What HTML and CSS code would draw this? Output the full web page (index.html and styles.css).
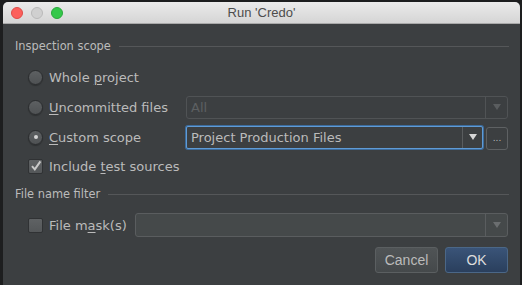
FILE: index.html
```html
<!DOCTYPE html>
<html lang="en">
<head>
    <meta charset="UTF-8">
    <title>Run 'Credo'</title>
    <link rel="stylesheet" href="styles.css">
</head>
<body>
    <div class="window">
        <div class="titlebar">
            <div class="lights">
                <span class="light red"></span>
                <span class="light gray"></span>
                <span class="light green"></span>
            </div>
            <div class="title">Run 'Credo'</div>
            <div class="lights-spacer"></div>
        </div>

        <div class="content">
            <div class="group-title">
                <span>Inspection scope</span>
                <div class="rule"></div>
            </div>

            <div class="row">
                <label class="option"><span class="radio"></span><span>Whole <u>p</u>roject</span></label>
            </div>

            <div class="row">
                <label class="option"><span class="radio"></span><span><u>U</u>ncommitted files</span></label>
                <div class="combo disabled">
                    <span class="combo-text">All</span>
                    <span class="combo-arrow"><i class="tri"></i></span>
                </div>
            </div>

            <div class="row">
                <label class="option"><span class="radio checked"></span><span><u>C</u>ustom scope</span></label>
                <div class="combo focused">
                    <span class="combo-text">Project Production Files</span>
                    <span class="combo-arrow"><i class="tri"></i></span>
                </div>
                <button class="dots">...</button>
            </div>

            <div class="row short">
                <label class="option">
                    <span class="checkbox">
                        <svg width="12" height="12" viewBox="0 0 12 12">
                            <path d="M2 6.2 L4.8 9.4 L10.4 1.4" fill="none" stroke="#c8c8c8" stroke-width="2"/>
                        </svg>
                    </span>
                    <span>Include <u>t</u>est sources</span>
                </label>
            </div>

            <div class="group-title second">
                <span>File name filter</span>
                <div class="rule"></div>
            </div>

            <div class="row mask-row">
                <label class="option mask"><span class="checkbox"></span><span>File m<u>a</u>sk(s)</span></label>
                <div class="combo field">
                    <span class="combo-text"></span>
                    <span class="combo-arrow"><i class="tri"></i></span>
                </div>
            </div>

            <div class="actions">
                <button class="btn">Cancel</button>
                <button class="btn primary">OK</button>
            </div>
        </div>
    </div>
</body>
</html>
```

FILE: styles.css
```css
* {
    margin: 0;
    padding: 0;
    box-sizing: border-box;
}

body {
    background: #1d1e1f;
    font-family: "DejaVu Sans", "Noto Sans", sans-serif;
    font-size: 13px;
    color: #bbbbbb;
    padding: 2px 0 0 3px;
    height: 285px;
    overflow: hidden;
}

.window {
    width: 517px;
    height: 283px;
    background: #3c3f41;
    border-radius: 5px 5px 0 0;
    overflow: hidden;
}

/* title bar */
.titlebar {
    height: 22px;
    display: flex;
    align-items: center;
    padding: 0 8px;
    background: linear-gradient(180deg, #ebebeb 0%, #d5d5d5 100%);
    border-bottom: 1px solid #a9a9a9;
}

.lights {
    display: flex;
    gap: 8px;
    width: 60px;
}

.lights-spacer {
    width: 60px;
}

.light {
    width: 12px;
    height: 12px;
    border-radius: 50%;
}

.light.red {
    background: #fc605c;
    border: 1px solid #de4c48;
}

.light.gray {
    background: #d0d0d0;
    border: 1px solid #b9b9b9;
}

.light.green {
    background: #34c84a;
    border: 1px solid #2aa83c;
}

.title {
    flex: 1;
    text-align: center;
    font-family: "Liberation Sans", Arial, sans-serif;
    font-size: 13px;
    color: #4d4d4d;
}

/* dialog body */
.content {
    padding: 14px 11px 0 12px;
}

.group-title {
    display: flex;
    align-items: center;
    gap: 8px;
    height: 16px;
    margin-bottom: 8px;
    font-size: 11.4px;
}

.group-title.second {
    margin-top: 6px;
    margin-bottom: 8px;
}

.rule {
    flex: 1;
    height: 1px;
    background: #555759;
}

.row {
    display: flex;
    align-items: center;
    height: 30px;
}

.row.short {
    height: 28px;
}

.option {
    display: flex;
    align-items: center;
    gap: 6px;
    width: 171px;
    padding-left: 13px;
    white-space: nowrap;
    color: #bbbbbb;
}

.option.mask {
    width: 120px;
}

.option u {
    text-decoration-thickness: 1px;
    text-underline-offset: 2px;
}

.radio {
    width: 15px;
    height: 15px;
    border-radius: 50%;
    background: linear-gradient(180deg, #5d6062 0%, #4f5254 100%);
    border: 1px solid #2b2d2f;
    box-shadow: 0 1px 1px rgba(0, 0, 0, 0.25);
    display: flex;
    align-items: center;
    justify-content: center;
    flex-shrink: 0;
}

.radio.checked::after {
    content: "";
    width: 4px;
    height: 4px;
    border-radius: 50%;
    background: #d4d4d4;
}

.checkbox {
    width: 15px;
    height: 15px;
    border-radius: 2px;
    background: linear-gradient(180deg, #5f6264 0%, #545759 100%);
    border: 1px solid #303234;
    display: flex;
    align-items: center;
    justify-content: center;
    flex-shrink: 0;
}

/* combo boxes */
.combo {
    display: flex;
    align-items: stretch;
    height: 23px;
    width: 322px;
    border: 1px solid #5a5d5f;
    border-radius: 3px;
    background: #3c3f41;
}

.combo-text {
    flex: 1;
    padding-left: 4px;
    display: flex;
    align-items: center;
}

.combo-arrow {
    width: 22px;
    border-left: 1px solid #5a5d5f;
    display: flex;
    align-items: center;
    justify-content: center;
}

.tri {
    width: 0;
    height: 0;
    border-left: 4px solid transparent;
    border-right: 4px solid transparent;
    border-top: 6px solid #bbbbbb;
}

.combo.disabled {
    border-color: #505355;
}

.combo.disabled .combo-text {
    color: #5d6062;
}

.combo.disabled .combo-arrow {
    border-color: #505355;
}

.combo.disabled .tri {
    border-top-color: #5a5d5f;
}

.combo.focused {
    width: 297px;
    height: 23px;
    border: 1px solid #5f9bd6;
    box-shadow: 0 0 0 1px #3d6c9c;
    border-radius: 2px;
}

.combo.focused .combo-arrow {
    width: 20px;
    border-color: #5a5d5f;
}

.combo.focused .tri {
    border-top-color: #d6d6d6;
}

.combo.field {
    width: 373px;
    height: 24px;
    background: #45494a;
    border-color: #5a5d5f;
}

.combo.field .tri {
    border-top-color: #6b6e70;
}

.dots {
    margin-left: 3px;
    margin-top: 2px;
    width: 22px;
    height: 23px;
    background: #3c3f41;
    border: 1px solid #5e6163;
    border-radius: 3px;
    color: #bbbbbb;
    font-size: 9px;
    display: flex;
    align-items: center;
    justify-content: center;
    font-family: "DejaVu Sans", sans-serif;
}

.mask-row {
    margin-top: 3px;
}

/* dialog buttons */
.actions {
    display: flex;
    justify-content: flex-end;
    gap: 7px;
    margin-top: 7px;
    padding-right: 1px;
}

.btn {
    width: 63px;
    height: 26px;
    border-radius: 3px;
    border: 1px solid #5b5f61;
    background: linear-gradient(180deg, #505456 0%, #45494b 100%);
    color: #bbbbbb;
    font-family: "Liberation Sans", Arial, sans-serif;
    font-size: 14px;
}

.btn.primary {
    border-color: #4b6787;
    background: linear-gradient(180deg, #3a5478 0%, #2a3f5d 100%);
    color: #dddddd;
}
```
